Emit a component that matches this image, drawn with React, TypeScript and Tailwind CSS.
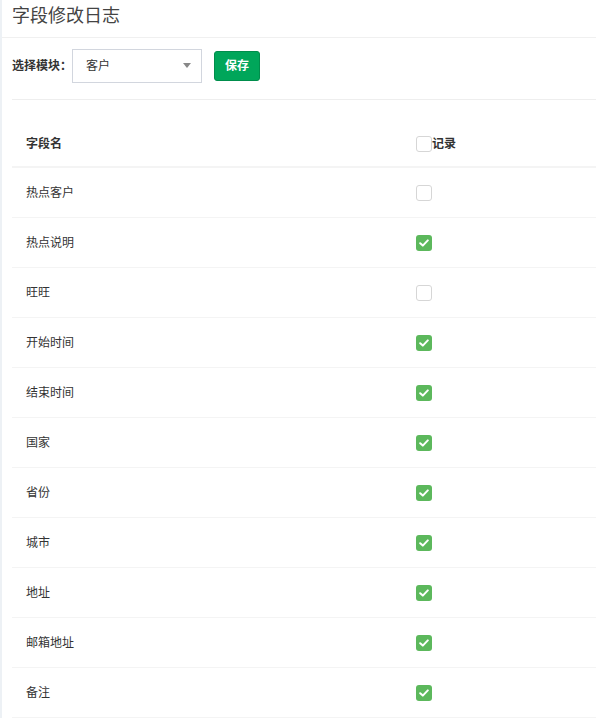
import React from "react";

const rows: { name: string; checked: boolean }[] = [
  { name: "热点客户", checked: false },
  { name: "热点说明", checked: true },
  { name: "旺旺", checked: false },
  { name: "开始时间", checked: true },
  { name: "结束时间", checked: true },
  { name: "国家", checked: true },
  { name: "省份", checked: true },
  { name: "城市", checked: true },
  { name: "地址", checked: true },
  { name: "邮箱地址", checked: true },
  { name: "备注", checked: true },
];

function Box({ checked }: { checked: boolean }) {
  if (checked) {
    return (
      <span className="flex h-[16px] w-[16px] items-center justify-center rounded-[3px] bg-[#5cb85c]">
        <svg width="10" height="8" viewBox="0 0 10 8">
          <path d="M1.2 4.2 L3.8 6.6 L8.8 1.4" fill="none" stroke="#fff" strokeWidth="2" strokeLinecap="round" strokeLinejoin="round" />
        </svg>
      </span>
    );
  }
  return <span className="block h-[16px] w-[16px] rounded-[3px] border border-[#d6d6d6] bg-white" />;
}

export default function App() {
  return (
    <div
      className="flex min-h-[718px] w-[596px] overflow-hidden bg-white text-[12px] text-[#333]"
      style={{ fontFamily: '"Liberation Sans", "Noto Sans CJK SC", sans-serif' }}
    >
      <div className="w-[2px] shrink-0 bg-[#edf1f5]" />
      <div className="flex-1">
        <div className="h-[38px] border-b border-[#f0f0f0] pl-[10px] text-[18px] leading-[33px] text-[#444]">
          字段修改日志
        </div>
        <div className="pl-[10px]">
          <div className="flex h-[61px] items-center pb-[8px] pt-[2px]">
            <span className="font-bold">选择模块：</span>
            <div className="flex h-[34px] w-[130px] items-center justify-between border border-[#d2d6de] pl-[13px] pr-[10px]">
              <span>客户</span>
              <svg width="8" height="5" viewBox="0 0 8 5">
                <path d="M0 0 L8 0 L4 5 Z" fill="#888" />
              </svg>
            </div>
            <button className="ml-[12px] h-[30px] w-[46px] rounded-[3px] border border-[#008d4c] bg-[#00a65a] text-[12px] font-bold text-white">
              保存
            </button>
          </div>
          <div className="border-t border-[#eeeeee]" />
          <div className="mt-[21px]">
            <div className="flex h-[47px] items-center border-b-2 border-[#f4f4f4] pt-[1px]">
              <div className="w-[390px] pl-[14px] font-bold">字段名</div>
              <div className="flex items-center pl-[14px] font-bold">
                <Box checked={false} />
                <span>记录</span>
              </div>
            </div>
            {rows.map((r) => (
              <div key={r.name} className="flex h-[50px] items-center border-b border-[#f4f4f4]">
                <div className="w-[390px] pl-[14px]">{r.name}</div>
                <div className="pl-[14px]">
                  <Box checked={r.checked} />
                </div>
              </div>
            ))}
          </div>
        </div>
      </div>
    </div>
  );
}
